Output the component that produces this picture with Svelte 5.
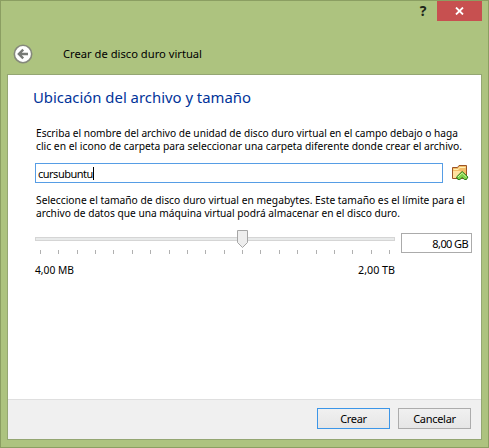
<script lang="ts">
    type Row = { text: string; width: number };

    let fileName = $state('cursubuntu');

    const description: Row[] = [
        { text: 'Escriba el nombre del archivo de unidad de disco duro virtual en el campo debajo o haga', width: 422 },
        { text: 'clic en el icono de carpeta para seleccionar una carpeta diferente donde crear el archivo.', width: 426 },
    ];

    const sizeHelp: Row[] = [
        { text: 'Seleccione el tamaño de disco duro virtual en megabytes. Este tamaño es el límite para el', width: 429 },
        { text: 'archivo de datos que una máquina virtual podrá almacenar en el disco duro.', width: 364 },
    ];

    const TICKS = 20;
    const ticks = Array.from({ length: TICKS }, (_, i) => Math.round(5 + (i * 349) / (TICKS - 1)));
</script>

{#snippet paragraph(rows: Row[])}
    <svg class="line" width="440" height="30">
        {#each rows as row, i}
            <text x="0" y={12 + i * 13} textLength={row.width} lengthAdjust="spacingAndGlyphs">{row.text}</text>
        {/each}
    </svg>
{/snippet}

<div class="window">
    <div class="titlebar">
        <button class="help" aria-label="Ayuda">?</button>
        <button class="close" aria-label="Cerrar">
            <svg width="9" height="8" viewBox="0 0 9 8"><path d="M1 .5 8 7.5M8 .5 1 7.5" stroke="#fff" stroke-width="1.8" /></svg>
        </button>
    </div>

    <header>
        <button class="back" aria-label="Atrás">
            <svg width="20" height="20" viewBox="0 0 20 20">
                <circle cx="10" cy="10" r="8.7" fill="#fff" stroke="#85897b" stroke-width="1.6" />
                <path d="M15 10H6M10.2 5.7 5.9 10l4.3 4.3" fill="none" stroke="#777a76" stroke-width="2.4" />
            </svg>
        </button>
        <svg class="line title" width="160" height="18">
            <text x="0" y="13" textLength="139" lengthAdjust="spacingAndGlyphs">Crear de disco duro virtual</text>
        </svg>
    </header>

    <div class="panel">
        <main>
            <h1>
                <svg width="240" height="22">
                    <text x="0" y="17" textLength="218" lengthAdjust="spacingAndGlyphs">Ubicación del archivo y tamaño</text>
                </svg>
            </h1>

            <div class="help-text">
                {@render paragraph(description)}
            </div>

            <div class="file-row">
                <div class="field"><span>{fileName}</span><i class="caret"></i></div>
                <button class="folder" aria-label="Elegir carpeta">
                    <svg width="17" height="16" viewBox="0 0 17 16">
                        <path d="M.5 13.5v-11h5l1.5-2h7.5v13z" fill="#f3bd68" stroke="#9c5426" />
                        <path d="M1.5 4.5h4.7l1.3-2h6" fill="none" stroke="#fff0b4" />
                        <path d="M1 13V6h8L5 13z" fill="#ffe1a0" />
                        <path d="m10.2 6.5 5.7 5.5-1.4 2.5h-2l-2.3-2-2.3 2h-2L4.5 12z" fill="#80d34b" stroke="#287a1b" />
                        <path d="m6 12 4.2-4 4.2 4" stroke="#d2f6a2" fill="none" />
                    </svg>
                </button>
            </div>

            <div class="help-text second">
                {@render paragraph(sizeHelp)}
            </div>

            <div class="size-row">
                <div class="slider">
                    <svg width="360" height="27" viewBox="0 0 360 27">
                        <rect x=".5" y="8.5" width="359" height="3" fill="#e8eaea" stroke="#d5d5d5" />
                        {#each ticks as x}
                            <path d="M{x + 0.5} 21v4" stroke="#b0b0b0" />
                        {/each}
                        <path d="M202.5 1.5h10v12l-5 5-5-5z" fill="#eee" stroke="#a6a6a6" />
                    </svg>
                    <div class="labels">
                        <svg class="line" width="50" height="16"><text x="0" y="11" textLength="39" lengthAdjust="spacingAndGlyphs">4,00 MB</text></svg>
                        <svg class="line" width="37" height="16"><text x="0" y="11" textLength="37" lengthAdjust="spacingAndGlyphs">2,00 TB</text></svg>
                    </div>
                </div>
                <div class="size">8,00 GB</div>
            </div>
        </main>

        <footer>
            <button class="primary">Crear</button>
            <button>Cancelar</button>
        </footer>
    </div>
</div>

<style>
    :global(body) {
        margin: 0;
    }

    .window {
        box-sizing: border-box;
        width: 489px;
        height: 448px;
        padding: 0 7px 7px 6px;
        border: 1px solid #8b9e62;
        background: #adc37f;
        font-family: "Noto Sans", "Open Sans", sans-serif;
        font-size: 11px;
        color: #000;
        display: flex;
        flex-direction: column;
    }

    button {
        font: inherit;
        color: inherit;
        padding: 0;
        border: 0;
        background: none;
    }

    svg {
        display: block;
    }

    .line {
        overflow: visible;
        font-size: 11px;
    }

    .titlebar {
        display: flex;
        justify-content: flex-end;
        height: 20px;
    }

    .help {
        width: 20px;
        margin-right: 4px;
        font-size: 14px;
        line-height: 20px;
        font-weight: 700;
        color: #20261a;
    }

    .close {
        display: flex;
        align-items: center;
        justify-content: center;
        width: 45px;
        height: 20px;
        margin-right: -1px;
        background: #c75050;
    }

    header {
        display: flex;
        align-items: center;
        height: 53px;
        box-sizing: border-box;
        padding: 13px 0 0 6px;
    }

    .title {
        margin-left: 30px;
    }

    .panel {
        flex: 1;
        display: flex;
        flex-direction: column;
        border: 1px solid #94a673;
        background: #fff;
        margin-right: -1px;
    }

    main {
        flex: 1;
        padding: 11px 0 0 25px;
    }

    h1 {
        margin: 0;
        font-size: 15px;
        font-weight: 400;
    }

    h1 text {
        fill: #003399;
    }

    .help-text {
        margin: 17px 0 0 3px;
    }

    .file-row {
        display: flex;
        align-items: center;
        height: 20px;
        margin: 8px 0 0 2px;
    }

    .field {
        box-sizing: border-box;
        width: 408px;
        height: 20px;
        padding-left: 2px;
        border: 1px solid #569de5;
        display: flex;
        align-items: center;
        letter-spacing: -0.5px;
    }

    .caret {
        width: 1px;
        height: 13px;
        background: #000;
    }

    .folder {
        margin-left: 9px;
    }

    .second {
        margin-top: 9px;
    }

    .size-row {
        display: flex;
        margin: 7px 0 0 2px;
    }

    .slider {
        width: 360px;
    }

    .labels {
        display: flex;
        justify-content: space-between;
        margin-top: 7px;
    }

    .size {
        box-sizing: border-box;
        width: 71px;
        height: 20px;
        margin: 4px 0 0 6px;
        padding-right: 3px;
        border: 1px solid #ababab;
        line-height: 20px;
        text-align: right;
        letter-spacing: -0.6px;
    }

    footer {
        box-sizing: border-box;
        height: 40px;
        padding: 8px 10px 0 0;
        border-top: 1px solid #dfdfdf;
        background: #f0f0f0;
        display: flex;
        justify-content: flex-end;
        gap: 8px;
    }

    footer button {
        box-sizing: border-box;
        width: 73px;
        height: 21px;
        border: 1px solid #acacac;
        background: linear-gradient(#f0f0f0, #e6e6e6);
        line-height: 20px;
        letter-spacing: -0.3px;
    }

    footer .primary {
        border-color: #3c96e8;
    }
</style>
